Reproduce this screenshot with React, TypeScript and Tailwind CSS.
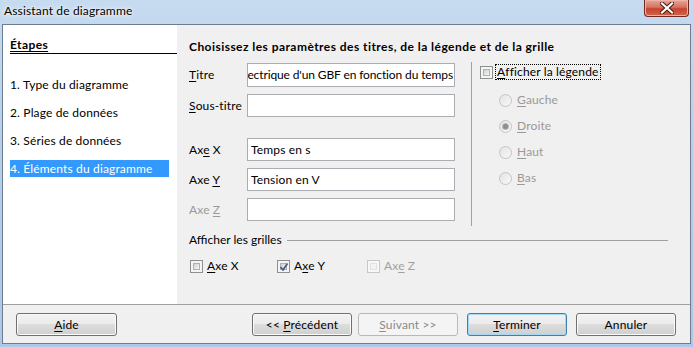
import React from "react";

const FONT = "font-['Lato','Segoe_UI',sans-serif]";

function U({ children }: { children: React.ReactNode }) {
  return <span className="underline underline-offset-[2px]">{children}</span>;
}

function CheckBox({ checked = false, disabled = false }: { checked?: boolean; disabled?: boolean }) {
  return (
    <div
      className={`relative w-[13px] h-[13px] border ${disabled ? "border-[#c8c8c8] bg-[#f7f7f7]" : "border-[#8e8f8f] bg-[#f4f4f4]"} p-[2px] shrink-0`}
    >
      <div
        className={`w-full h-full ${disabled ? "bg-[#f2f2f2] border border-[#e2e2e2]" : "bg-[linear-gradient(135deg,#cdd0d6,#f7f7f7)] border border-[#aeb1b6]"}`}
      />
      {checked && (
        <svg className="absolute left-[1px] top-[1px]" width="10" height="10" viewBox="0 0 10 10">
          <path d="M1.5 5 L4 8 L8.5 1.5" fill="none" stroke="#4a5d8a" strokeWidth="1.8" strokeLinejoin="round" />
        </svg>
      )}
    </div>
  );
}

function Radio({ checked = false }: { checked?: boolean }) {
  return (
    <div className="w-[13px] h-[13px] rounded-full border border-[#c4c4c4] bg-[linear-gradient(135deg,#e3e3e3,#f9f9f9)] flex items-center justify-center shrink-0">
      {checked && <div className="w-[5px] h-[5px] rounded-full bg-[#8d8d8d] shadow-[0_0_0_1px_#b8b8b8]" />}
    </div>
  );
}

function Field({ h, text, end = false }: { h: number; text?: string; end?: boolean }) {
  return (
    <div
      className={`w-[208px] ${h === 24 ? "h-[24px]" : "h-[23px]"} border border-[#abadb3] bg-white overflow-hidden whitespace-nowrap flex items-center ${end ? "justify-end pr-[1px] tracking-[-0.12px]" : "pl-[3px]"} text-black`}
    >
      <span className="shrink-0">{text}</span>
    </div>
  );
}

function Btn({
  children,
  kind = "normal",
  className = "",
}: {
  children: React.ReactNode;
  kind?: "normal" | "default" | "disabled";
  className?: string;
}) {
  const base = "h-[23px] w-[100px] rounded-[3px] border flex items-center justify-center";
  const style =
    kind === "disabled"
      ? "border-[#b5b9bc] bg-[#f4f4f4] text-[#8a8a8a]"
      : kind === "default"
      ? "border-[#3c7fb1] bg-[linear-gradient(#f2f2f2_0%,#ebebeb_50%,#dddddd_50%,#cfcfcf_100%)] shadow-[inset_0_0_0_1px_#a6d8f5] text-black"
      : "border-[#707070] bg-[linear-gradient(#f2f2f2_0%,#ebebeb_50%,#dddddd_50%,#cfcfcf_100%)] shadow-[inset_0_0_0_1px_#fbfbfb] text-black";
  return <div className={`${base} ${style} ${className}`}>{children}</div>;
}

export default function App() {
  return (
    <div
      className={`${FONT} text-[12px] leading-[16px] tracking-[0.15px] w-[693px] h-[347px] relative overflow-hidden bg-[linear-gradient(180deg,#c6dbf0_0%,#b7cfe9_40%,#adc8e6_100%)] flex flex-col`}
    >
      {/* title bar */}
      <div className="h-[24px] flex items-start pt-[3px] pl-[4px] shrink-0 relative">
        <span className="text-black [text-shadow:0_0_6px_#ffffff,0_0_3px_#ffffff]">Assistant de diagramme</span>
        <div className="absolute right-[4px] top-0 w-[45px] h-[17px] rounded-b-[4px] border border-t-0 border-[#6f2b22] bg-[linear-gradient(180deg,#e9a799_0%,#d7725f_45%,#c7432f_55%,#d0664a_100%)] shadow-[inset_0_0_0_1px_#eeb3a6] flex items-center justify-center">
          <svg width="14" height="12" viewBox="0 0 14 12">
            <path
              d="M2 1.5 L12 10.5 M12 1.5 L2 10.5"
              stroke="#4a1a14"
              strokeWidth="4.2"
              strokeLinecap="square"
              fill="none"
            />
            <path
              d="M2 1.5 L12 10.5 M12 1.5 L2 10.5"
              stroke="#ffffff"
              strokeWidth="2.2"
              strokeLinecap="square"
              fill="none"
            />
          </svg>
        </div>
      </div>

      {/* window client */}
      <div className="ml-[2px] mr-[2px] w-[689px] h-[320px] border border-[#6d7c8e] bg-[#f0f0f0] flex flex-col">
        <div className="h-[279px] flex">
          {/* steps panel */}
          <div className="w-[174px] bg-white flex flex-col">
            <div className="ml-[7px] mt-[12px] h-[17px] border-b border-black font-bold tracking-[0.4px] leading-[16px] text-black">
              <span className="underline underline-offset-[2px]">Étapes</span>
            </div>
            <div className="mt-[22px] flex flex-col gap-[11px] text-black">
              <div className="ml-[7px] h-[17px] leading-[17px]">1. Type du diagramme</div>
              <div className="ml-[7px] h-[17px] leading-[17px]">2. Plage de données</div>
              <div className="ml-[7px] h-[17px] leading-[17px]">3. Séries de données</div>
              <div className="ml-[7px] w-[159px] h-[17px] leading-[17px] bg-[#3399ff] text-white">
                4. Éléments du diagramme
              </div>
            </div>
          </div>

          {/* main */}
          <div className="flex-1 flex flex-col pl-[12px] pr-[22px]">
            <div className="mt-[14px] h-[16px] font-bold tracking-[0.45px] text-black whitespace-nowrap">
              Choisissez les paramètres des titres, de la légende et de la grille
            </div>

            <div className="mt-[7px] flex h-[164px]">
              {/* left form */}
              <div className="w-[266px] pt-[1px] flex flex-col">
                <div className="flex items-center h-[24px]">
                  <div className="w-[58px] text-black">
                    <U>T</U>itre
                  </div>
                  <Field h={24} end text="ectrique d'un GBF en fonction du temps" />
                </div>
                <div className="flex items-center h-[23px] mt-[7px]">
                  <div className="w-[58px] text-black">
                    <U>S</U>ous-titre
                  </div>
                  <Field h={23} />
                </div>
                <div className="flex items-center h-[23px] mt-[21px]">
                  <div className="w-[58px] text-black">
                    Ax<U>e</U> X
                  </div>
                  <Field h={23} text="Temps en s" />
                </div>
                <div className="flex items-center h-[23px] mt-[7px]">
                  <div className="w-[58px] text-black">
                    Axe <U>Y</U>
                  </div>
                  <Field h={23} text="Tension en V" />
                </div>
                <div className="flex items-center h-[23px] mt-[7px]">
                  <div className="w-[58px] text-[#9a9a9a]">
                    Axe <U>Z</U>
                  </div>
                  <Field h={23} />
                </div>
              </div>

              {/* legend column */}
              <div className="ml-[16px] border-l border-[#a0a0a0] flex-1 flex flex-col pl-[8px] pt-[2px]">
                <div className="flex items-center h-[16px]">
                  <CheckBox />
                  <div className="ml-[2px] h-[16px] px-[1px] border border-dotted border-black flex items-center text-black">
                    <U>A</U>fficher la légende
                  </div>
                </div>
                <div className="mt-[12px] ml-[19px] flex flex-col gap-[10px] text-[#999999]">
                  <div className="flex items-center h-[16px] gap-[5px]">
                    <Radio />
                    <span>
                      <U>G</U>auche
                    </span>
                  </div>
                  <div className="flex items-center h-[16px] gap-[5px]">
                    <Radio checked />
                    <span>
                      <U>D</U>roite
                    </span>
                  </div>
                  <div className="flex items-center h-[16px] gap-[5px]">
                    <Radio />
                    <span>
                      <U>H</U>aut
                    </span>
                  </div>
                  <div className="flex items-center h-[16px] gap-[5px]">
                    <Radio />
                    <span>
                      <U>B</U>as
                    </span>
                  </div>
                </div>
              </div>
            </div>

            {/* grids */}
            <div className="mt-[6px] h-[16px] flex items-center">
              <span className="text-black whitespace-nowrap tracking-normal">Afficher les grilles</span>
              <div className="ml-[5px] flex-1 h-[1px] bg-[#a0a0a0]" />
            </div>
            <div className="mt-[10px] h-[16px] flex items-center pl-[1px]">
              <div className="w-[87px] flex items-center gap-[4px] text-black">
                <CheckBox />
                <span>
                  <U>A</U>xe X
                </span>
              </div>
              <div className="w-[90px] flex items-center gap-[4px] text-black">
                <CheckBox checked />
                <span>
                  A<U>x</U>e Y
                </span>
              </div>
              <div className="flex items-center gap-[4px] text-[#a0a0a0]">
                <CheckBox disabled />
                <span>
                  Ax<U>e</U> Z
                </span>
              </div>
            </div>
          </div>
        </div>

        {/* buttons */}
        <div className="h-[1px] bg-[#a0a0a0]" />
        <div className="flex-1 flex items-start pt-[8px]">
          <Btn className="ml-[13px] w-[101px]">
            <span>
              <U>A</U>ide
            </span>
          </Btn>
          <Btn className="ml-[135px]">
            <span>
              &lt;&lt; <U>P</U>récédent
            </span>
          </Btn>
          <Btn kind="disabled" className="ml-[6px]">
            <span>
              <U>S</U>uivant &gt;&gt;
            </span>
          </Btn>
          <Btn kind="default" className="ml-[9px]">
            <span>
              <U>T</U>erminer
            </span>
          </Btn>
          <Btn className="ml-[9px]">
            <span>Annuler</span>
          </Btn>
        </div>
      </div>
    </div>
  );
}
